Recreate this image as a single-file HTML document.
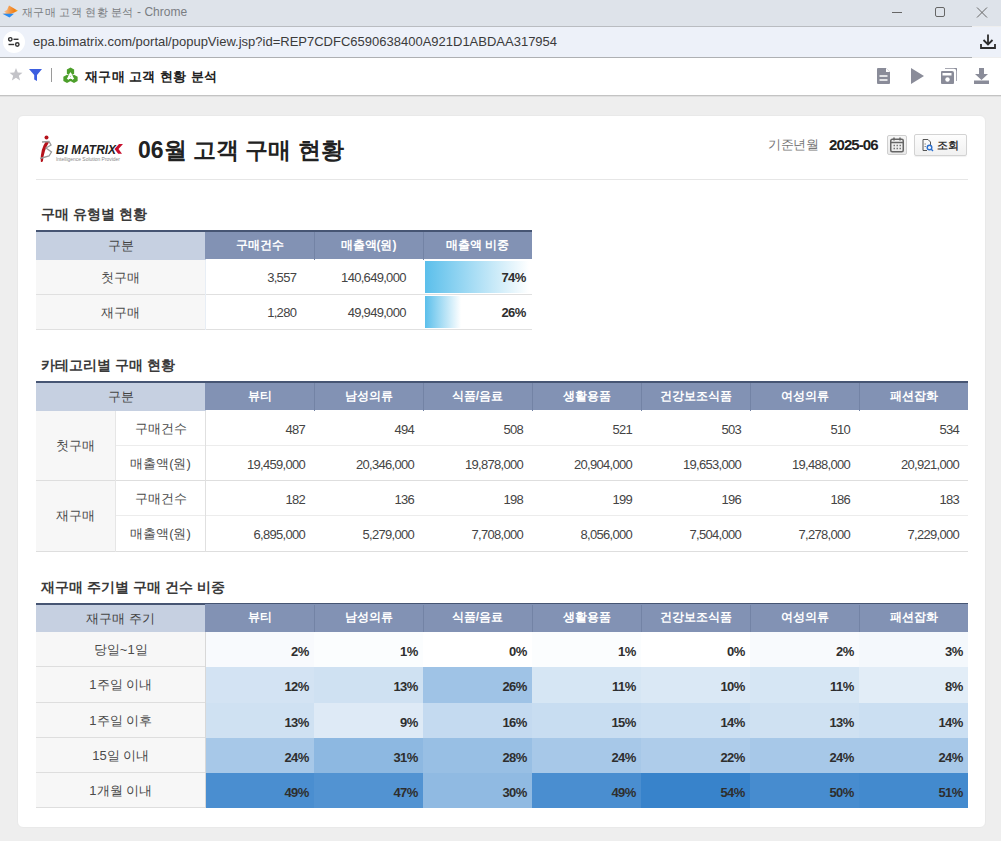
<!DOCTYPE html>
<html><head><meta charset="utf-8"><title>재구매 고객 현황 분석</title>
<style>
*{box-sizing:border-box;margin:0;padding:0}
html,body{width:1001px;height:841px;overflow:hidden}
body{position:relative;background:#eeeeee;font-family:"Liberation Sans", sans-serif;color:#333}
.a{position:absolute}
.t{white-space:nowrap}
.hd1{background:#c6d0e1;color:#444;text-align:center}
.hd2{background:#8292b4;color:#fff;text-align:center;font-weight:bold}
.num{text-align:right}
</style></head><body>

<div class="a" style="left:0;top:0;width:1001px;height:26px;background:#dee3ea"></div>
<div class="a" style="left:0;top:26px;width:972px;height:1px;background:#b9bcc1"></div>
<svg class="a" style="left:1px;top:4px" width="18" height="14" viewBox="0 0 18 14">
<defs><linearGradient id="og" x1="0" y1="0" x2="1" y2="0"><stop offset="0" stop-color="#fad2b0"/><stop offset="0.45" stop-color="#f39a4a"/><stop offset="0.8" stop-color="#f07d12"/><stop offset="1" stop-color="#ffc21a"/></linearGradient></defs>
<path d="M8 1.5 L17 6.8 L10 10 L1.5 10 L5 8.5 L3 7.5 L6 6 Z" fill="url(#og)"/>
<path d="M1.5 9.8 L13 9.8 L8.5 13.5 Z" fill="#2b8cf0"/>
</svg>
<div class="a t" style="left:22px;top:5px;font-size:12px;line-height:14px;color:#7a7d82"><span style="font-size:11px;letter-spacing:0.3px">재구매 고객 현황 분석</span> - Chrome</div>
<div class="a" style="left:892px;top:12px;width:10px;height:1px;background:#666"></div>
<div class="a" style="left:935px;top:7px;width:10px;height:10px;border:1px solid #666;border-radius:2px"></div>
<svg class="a" style="left:976px;top:7px" width="12" height="11" viewBox="0 0 12 11"><path d="M1 0.5 L11 10.5 M11 0.5 L1 10.5" stroke="#666" stroke-width="1"/></svg>
<div class="a" style="left:0;top:27px;width:1001px;height:30px;background:#edf1f9"></div>
<div class="a" style="left:0;top:57px;width:972px;height:1px;background:#aeb0b3"></div>
<div class="a" style="left:3px;top:31px;width:22px;height:22px;border-radius:50%;background:#fff"></div>
<svg class="a" style="left:7px;top:36px" width="14" height="12" viewBox="0 0 14 12">
<circle cx="3.3" cy="3.3" r="1.7" fill="none" stroke="#333" stroke-width="1.4"/><path d="M6.5 3.3 H11.5" stroke="#333" stroke-width="1.4"/>
<circle cx="10.3" cy="8.5" r="1.7" fill="none" stroke="#333" stroke-width="1.4"/><path d="M1.5 8.5 H7.2" stroke="#333" stroke-width="1.4"/>
</svg>
<div class="a t" style="left:33px;top:34px;font-size:13px;line-height:16px;color:#3b3b3b">epa.bimatrix.com/portal/popupView.jsp?id=REP7CDFC6590638400A921D1ABDAA317954</div>
<svg class="a" style="left:980px;top:34px" width="16" height="16" viewBox="0 0 16 16">
<path d="M8 0.5 V10 M3.5 6 L8 10.5 L12.5 6" fill="none" stroke="#2d2d2d" stroke-width="1.8"/>
<path d="M1 10 V14 H15 V10" fill="none" stroke="#2d2d2d" stroke-width="1.8"/>
</svg>
<div class="a" style="left:0;top:58px;width:1001px;height:37px;background:#fff"></div>
<div class="a" style="left:0;top:95px;width:1001px;height:1px;background:#c3c3c3"></div>
<div class="a" style="left:0;top:96px;width:1001px;height:1px;background:#e0e0e0"></div>
<svg class="a" style="left:9px;top:68px" width="14" height="13" viewBox="0 0 24 23"><path d="M12 0 L15.1 8 L23.5 8.3 L17 13.7 L19.3 22 L12 17.3 L4.7 22 L7 13.7 L0.5 8.3 L8.9 8 Z" fill="#c3c3c8"/></svg>
<svg class="a" style="left:29px;top:69px" width="13" height="12" viewBox="0 0 13 12"><path d="M0 0 H13 L8 6 V12 L5.2 10.5 V6 Z" fill="#3d5fe0"/></svg>
<div class="a" style="left:51px;top:68px;width:1px;height:14px;background:#9a9a9a"></div>
<svg class="a" style="left:63px;top:67px" width="16" height="17" viewBox="0 0 16 17"><path d="M7.50 8.80 L3.86 6.70 L3.86 2.50 L7.50 0.40 L11.14 2.50 L11.14 6.70 Z M4.00 16.10 L0.36 14.00 L0.36 9.80 L4.00 7.70 L7.64 9.80 L7.64 14.00 Z M11.00 16.10 L7.36 14.00 L7.36 9.80 L11.00 7.70 L14.64 9.80 L14.64 14.00 Z M7.5 5 L3.8 12 L11.2 12 Z" fill="#4d9f2b"/><path d="M7.5 6.2 L5.2 12.6 M7.5 6.2 L9.8 12.6 M6.1 10.3 H8.9" stroke="#fff" stroke-width="1.2" fill="none"/></svg>
<div class="a t" style="left:85px;top:69px;font-size:13.3px;letter-spacing:0.35px;line-height:16px;font-weight:bold;color:#222">재구매 고객 현황 분석</div>
<svg class="a" style="left:877px;top:68px" width="13" height="16" viewBox="0 0 13 16">
<path d="M1 0 H9 L13 4 V15 Q13 16 12 16 H1 Q0 16 0 15 V1 Q0 0 1 0 Z" fill="#8a8c99"/>
<path d="M9 0 V4 H13" fill="#fff"/><path d="M2.5 8 H10.5 M2.5 12 H10.5" stroke="#fff" stroke-width="1.6"/></svg>
<svg class="a" style="left:911px;top:68px" width="13" height="16" viewBox="0 0 13 16"><path d="M0 0 L13 8 L0 16 Z" fill="#8a8c99"/></svg>
<svg class="a" style="left:941px;top:68px" width="16" height="16" viewBox="0 0 16 16">
<path d="M4 0 H13 Q16 0 16 3 V13" fill="none" stroke="#8a8c99" stroke-width="1.5"/>
<path d="M1 3 H11 Q13 3 13 5 V15 Q13 16 12 16 H1 Q0 16 0 15 V4 Q0 3 1 3 Z" fill="#8a8c99"/>
<rect x="1.5" y="5" width="9" height="2.5" fill="#fff"/><circle cx="6.5" cy="11.5" r="2.2" fill="#fff"/></svg>
<svg class="a" style="left:974px;top:68px" width="15" height="16" viewBox="0 0 15 16">
<path d="M5 0 H10 V6 H14 L7.5 12 L1 6 H5 Z" fill="#8a8c99"/><rect x="0" y="12.5" width="15" height="3.5" fill="#8a8c99"/></svg>
<div class="a" style="left:17px;top:115px;width:969px;height:713px;background:#fff;border-radius:6px;border:1px solid #e9e9e9"></div>
<svg class="a" style="left:38px;top:134px" width="88" height="30" viewBox="0 0 88 30">
<circle cx="8.5" cy="3.5" r="2" fill="#b5121b"/>
<path d="M8 7.3 Q2.2 15 2.8 27.5 Q3.6 28.8 4.9 27.3 Q5.8 16.5 11 8.2 Z" fill="#b5121b"/>
<path d="M4 8 L11 7.5 L13 11 L8 14 L13.5 18 L11 22 L2 24.5" stroke="#9a9a9a" stroke-width="1.3" fill="none"/>
<text x="18" y="19.5" font-family="Liberation Sans" font-weight="bold" font-style="italic" font-size="12.5" fill="#222" textLength="60" lengthAdjust="spacingAndGlyphs">BI MATRIX</text>
<path d="M85 10 L80.5 15 L84 19.8 L80.2 19.8 L76.5 15 L81 10 Z" fill="#c8102e"/>
<text x="18" y="27" font-family="Liberation Sans" font-size="5" fill="#888" textLength="64" lengthAdjust="spacingAndGlyphs">Intelligence Solution Provider</text>
</svg>
<div class="a t" style="left:138px;top:136px;font-size:23px;line-height:28px;font-weight:bold;color:#222">06월 고객 구매 현황</div>
<div class="a t" style="left:768px;top:137px;font-size:12.5px;letter-spacing:-0.5px;line-height:16px;color:#777">기준년월</div>
<div class="a t" style="left:829px;top:137px;font-size:15px;letter-spacing:-0.9px;line-height:16px;font-weight:bold;color:#222">2025-06</div>
<div class="a" style="left:887px;top:135px;width:20px;height:20px;border:1px solid #cfcfcf;border-radius:2px;background:linear-gradient(#f6f6f6,#e9e9e9)"></div>
<svg class="a" style="left:890px;top:137px" width="14" height="16" viewBox="0 0 14 16">
<rect x="0.75" y="2.25" width="12.5" height="12.5" rx="1.5" fill="none" stroke="#666" stroke-width="1.5"/>
<path d="M1 5.5 H13" stroke="#666" stroke-width="1.5"/><path d="M4 0.5 V3.5 M10 0.5 V3.5" stroke="#666" stroke-width="1.5"/>
<path d="M3.5 8.5 H5 M6.5 8.5 H8 M9.5 8.5 H11 M3.5 11.5 H5 M6.5 11.5 H8 M9.5 11.5 H11" stroke="#777" stroke-width="1.3"/>
</svg>
<div class="a" style="left:914px;top:134px;width:53px;height:22px;border:1px solid #d3d3d3;border-radius:2px;background:linear-gradient(#fdfdfd,#f1f1f1);box-shadow:0 1px 1px rgba(0,0,0,0.06)"></div>
<svg class="a" style="left:922px;top:139px" width="12" height="13" viewBox="0 0 12 13">
<path d="M1 0.5 H6 L8.5 3 V6 M1 0.5 V11.5 H5" fill="none" stroke="#555" stroke-width="1"/>
<path d="M2.5 5 H4 M2.5 7.5 H4" stroke="#777" stroke-width="0.8"/>
<circle cx="7.5" cy="8.5" r="2.3" fill="none" stroke="#2b6fce" stroke-width="1.4"/><path d="M9 10 L11 12" stroke="#2b6fce" stroke-width="1.5"/>
</svg>
<div class="a t" style="left:937px;top:138px;font-size:11px;line-height:15px;font-weight:bold;color:#333">조회</div>
<div class="a" style="left:36px;top:179px;width:932px;height:1px;background:#e6e6e6"></div>
<div class="a t" style="left:41px;top:206px;font-size:14px;line-height:16px;font-weight:bold;color:#3a3a3a">구매 유형별 현황</div>
<div class="a" style="left:36px;top:230px;width:496px;height:2px;background:#465573"></div>
<div class="a t hd1" style="left:36px;top:232px;width:169.5px;height:27.600000000000023px;line-height:27.600000000000023px;font-size:13px;font-weight:normal;text-align:center;">구분</div>
<div class="a t hd2" style="left:205px;top:231.5px;width:109px;height:27.600000000000023px;line-height:27.600000000000023px;font-size:12px;font-weight:bold;text-align:center;">구매건수</div>
<div class="a t hd2" style="left:314px;top:231.5px;width:109px;height:27.600000000000023px;line-height:27.600000000000023px;font-size:12px;font-weight:bold;text-align:center;">매출액(원)</div>
<div class="a t hd2" style="left:423px;top:231.5px;width:109px;height:27.600000000000023px;line-height:27.600000000000023px;font-size:12px;font-weight:bold;text-align:center;">매출액 비중</div>
<div class="a" style="left:314px;top:232px;width:1px;height:27.600000000000023px;background:#7383a5"></div>
<div class="a" style="left:423px;top:232px;width:1px;height:27.600000000000023px;background:#7383a5"></div>
<div class="a" style="left:36px;top:259.6px;width:169.5px;height:35.25px;background:#f7f7f7"></div>
<div class="a t " style="left:36px;top:259.6px;width:169.5px;height:35.25px;line-height:35.25px;font-size:13px;font-weight:normal;text-align:center;color:#4a4a4a;">첫구매</div>
<div class="a t " style="left:205.5px;top:260.20000000000005px;width:109.0px;height:35.25px;line-height:35.25px;font-size:13px;font-weight:normal;text-align:right;letter-spacing:-0.7px;padding-right:18.3px;color:#444;">3,557</div>
<div class="a t " style="left:314.5px;top:260.20000000000005px;width:109.0px;height:35.25px;line-height:35.25px;font-size:13px;font-weight:normal;text-align:right;letter-spacing:-0.7px;padding-right:17.8px;color:#444;">140,649,000</div>
<div class="a" style="left:425px;top:261.1px;width:104px;height:31.75px;background:linear-gradient(90deg,#5bbfeb,#ffffff)"></div>
<div class="a t " style="left:423.5px;top:260.20000000000005px;width:108.5px;height:35.25px;line-height:35.25px;font-size:13px;font-weight:bold;text-align:right;letter-spacing:-0.6px;padding-right:6.4px;color:#2e2e2e;">74%</div>
<div class="a" style="left:36px;top:293.85px;width:496px;height:1px;background:#e0e0e0"></div>
<div class="a" style="left:36px;top:294.85px;width:169.5px;height:35.25px;background:#f7f7f7"></div>
<div class="a t " style="left:36px;top:294.85px;width:169.5px;height:35.25px;line-height:35.25px;font-size:13px;font-weight:normal;text-align:center;color:#4a4a4a;">재구매</div>
<div class="a t " style="left:205.5px;top:295.45000000000005px;width:109.0px;height:35.25px;line-height:35.25px;font-size:13px;font-weight:normal;text-align:right;letter-spacing:-0.7px;padding-right:18.3px;color:#444;">1,280</div>
<div class="a t " style="left:314.5px;top:295.45000000000005px;width:109.0px;height:35.25px;line-height:35.25px;font-size:13px;font-weight:normal;text-align:right;letter-spacing:-0.7px;padding-right:17.8px;color:#444;">49,949,000</div>
<div class="a" style="left:425px;top:296.35px;width:36px;height:31.75px;background:linear-gradient(90deg,#5bbfeb,#ffffff)"></div>
<div class="a t " style="left:423.5px;top:295.45000000000005px;width:108.5px;height:35.25px;line-height:35.25px;font-size:13px;font-weight:bold;text-align:right;letter-spacing:-0.6px;padding-right:6.4px;color:#2e2e2e;">26%</div>
<div class="a" style="left:36px;top:329.1px;width:496px;height:1px;background:#e0e0e0"></div>
<div class="a" style="left:205px;top:259.6px;width:1px;height:70.5px;background:#e8eef5"></div>
<div class="a t" style="left:41px;top:357px;font-size:14px;line-height:16px;font-weight:bold;color:#3a3a3a">카테고리별 구매 현황</div>
<div class="a" style="left:36px;top:381px;width:932px;height:2px;background:#465573"></div>
<div class="a t hd1" style="left:36px;top:383px;width:169.5px;height:27.5px;line-height:27.5px;font-size:13px;font-weight:normal;text-align:center;">구분</div>
<div class="a t hd2" style="left:205px;top:382.5px;width:109px;height:27.5px;line-height:27.5px;font-size:12px;font-weight:bold;text-align:center;">뷰티</div>
<div class="a t hd2" style="left:314px;top:382.5px;width:109px;height:27.5px;line-height:27.5px;font-size:12px;font-weight:bold;text-align:center;">남성의류</div>
<div class="a t hd2" style="left:423px;top:382.5px;width:109px;height:27.5px;line-height:27.5px;font-size:12px;font-weight:bold;text-align:center;">식품/음료</div>
<div class="a t hd2" style="left:532px;top:382.5px;width:109px;height:27.5px;line-height:27.5px;font-size:12px;font-weight:bold;text-align:center;">생활용품</div>
<div class="a t hd2" style="left:641px;top:382.5px;width:109px;height:27.5px;line-height:27.5px;font-size:12px;font-weight:bold;text-align:center;">건강보조식품</div>
<div class="a t hd2" style="left:750px;top:382.5px;width:109px;height:27.5px;line-height:27.5px;font-size:12px;font-weight:bold;text-align:center;">여성의류</div>
<div class="a t hd2" style="left:859px;top:382.5px;width:109px;height:27.5px;line-height:27.5px;font-size:12px;font-weight:bold;text-align:center;">패션잡화</div>
<div class="a" style="left:314px;top:383px;width:1px;height:27.5px;background:#7383a5"></div>
<div class="a" style="left:423px;top:383px;width:1px;height:27.5px;background:#7383a5"></div>
<div class="a" style="left:532px;top:383px;width:1px;height:27.5px;background:#7383a5"></div>
<div class="a" style="left:641px;top:383px;width:1px;height:27.5px;background:#7383a5"></div>
<div class="a" style="left:750px;top:383px;width:1px;height:27.5px;background:#7383a5"></div>
<div class="a" style="left:859px;top:383px;width:1px;height:27.5px;background:#7383a5"></div>
<div class="a" style="left:36px;top:410.5px;width:79.5px;height:70.5px;background:#f7f7f7"></div>
<div class="a t " style="left:36px;top:410.5px;width:79.5px;height:70.5px;line-height:70.5px;font-size:13px;font-weight:normal;text-align:center;color:#4a4a4a;">첫구매</div>
<div class="a t " style="left:115.5px;top:410.5px;width:90.0px;height:35.25px;line-height:35.25px;font-size:13px;font-weight:normal;text-align:center;color:#4a4a4a;">구매건수</div>
<div class="a t " style="left:205px;top:411.7px;width:109px;height:35.25px;line-height:35.25px;font-size:13px;font-weight:normal;text-align:right;letter-spacing:-0.7px;padding-right:9.0px;color:#444;">487</div>
<div class="a t " style="left:314px;top:411.7px;width:109px;height:35.25px;line-height:35.25px;font-size:13px;font-weight:normal;text-align:right;letter-spacing:-0.7px;padding-right:9.0px;color:#444;">494</div>
<div class="a t " style="left:423px;top:411.7px;width:109px;height:35.25px;line-height:35.25px;font-size:13px;font-weight:normal;text-align:right;letter-spacing:-0.7px;padding-right:9.0px;color:#444;">508</div>
<div class="a t " style="left:532px;top:411.7px;width:109px;height:35.25px;line-height:35.25px;font-size:13px;font-weight:normal;text-align:right;letter-spacing:-0.7px;padding-right:9.0px;color:#444;">521</div>
<div class="a t " style="left:641px;top:411.7px;width:109px;height:35.25px;line-height:35.25px;font-size:13px;font-weight:normal;text-align:right;letter-spacing:-0.7px;padding-right:9.0px;color:#444;">503</div>
<div class="a t " style="left:750px;top:411.7px;width:109px;height:35.25px;line-height:35.25px;font-size:13px;font-weight:normal;text-align:right;letter-spacing:-0.7px;padding-right:9.0px;color:#444;">510</div>
<div class="a t " style="left:859px;top:411.7px;width:109px;height:35.25px;line-height:35.25px;font-size:13px;font-weight:normal;text-align:right;letter-spacing:-0.7px;padding-right:9.0px;color:#444;">534</div>
<div class="a" style="left:115.5px;top:444.75px;width:852.5px;height:1px;background:#ececec"></div>
<div class="a t " style="left:115.5px;top:445.75px;width:90.0px;height:35.25px;line-height:35.25px;font-size:13px;font-weight:normal;text-align:center;color:#4a4a4a;">매출액(원)</div>
<div class="a t " style="left:205px;top:446.95px;width:109px;height:35.25px;line-height:35.25px;font-size:13px;font-weight:normal;text-align:right;letter-spacing:-0.7px;padding-right:9.0px;color:#444;">19,459,000</div>
<div class="a t " style="left:314px;top:446.95px;width:109px;height:35.25px;line-height:35.25px;font-size:13px;font-weight:normal;text-align:right;letter-spacing:-0.7px;padding-right:9.0px;color:#444;">20,346,000</div>
<div class="a t " style="left:423px;top:446.95px;width:109px;height:35.25px;line-height:35.25px;font-size:13px;font-weight:normal;text-align:right;letter-spacing:-0.7px;padding-right:9.0px;color:#444;">19,878,000</div>
<div class="a t " style="left:532px;top:446.95px;width:109px;height:35.25px;line-height:35.25px;font-size:13px;font-weight:normal;text-align:right;letter-spacing:-0.7px;padding-right:9.0px;color:#444;">20,904,000</div>
<div class="a t " style="left:641px;top:446.95px;width:109px;height:35.25px;line-height:35.25px;font-size:13px;font-weight:normal;text-align:right;letter-spacing:-0.7px;padding-right:9.0px;color:#444;">19,653,000</div>
<div class="a t " style="left:750px;top:446.95px;width:109px;height:35.25px;line-height:35.25px;font-size:13px;font-weight:normal;text-align:right;letter-spacing:-0.7px;padding-right:9.0px;color:#444;">19,488,000</div>
<div class="a t " style="left:859px;top:446.95px;width:109px;height:35.25px;line-height:35.25px;font-size:13px;font-weight:normal;text-align:right;letter-spacing:-0.7px;padding-right:9.0px;color:#444;">20,921,000</div>
<div class="a" style="left:36px;top:480.0px;width:932px;height:1px;background:#dedede"></div>
<div class="a" style="left:36px;top:481.0px;width:79.5px;height:70.5px;background:#f7f7f7"></div>
<div class="a t " style="left:36px;top:481.0px;width:79.5px;height:70.5px;line-height:70.5px;font-size:13px;font-weight:normal;text-align:center;color:#4a4a4a;">재구매</div>
<div class="a t " style="left:115.5px;top:481.0px;width:90.0px;height:35.25px;line-height:35.25px;font-size:13px;font-weight:normal;text-align:center;color:#4a4a4a;">구매건수</div>
<div class="a t " style="left:205px;top:482.2px;width:109px;height:35.25px;line-height:35.25px;font-size:13px;font-weight:normal;text-align:right;letter-spacing:-0.7px;padding-right:9.0px;color:#444;">182</div>
<div class="a t " style="left:314px;top:482.2px;width:109px;height:35.25px;line-height:35.25px;font-size:13px;font-weight:normal;text-align:right;letter-spacing:-0.7px;padding-right:9.0px;color:#444;">136</div>
<div class="a t " style="left:423px;top:482.2px;width:109px;height:35.25px;line-height:35.25px;font-size:13px;font-weight:normal;text-align:right;letter-spacing:-0.7px;padding-right:9.0px;color:#444;">198</div>
<div class="a t " style="left:532px;top:482.2px;width:109px;height:35.25px;line-height:35.25px;font-size:13px;font-weight:normal;text-align:right;letter-spacing:-0.7px;padding-right:9.0px;color:#444;">199</div>
<div class="a t " style="left:641px;top:482.2px;width:109px;height:35.25px;line-height:35.25px;font-size:13px;font-weight:normal;text-align:right;letter-spacing:-0.7px;padding-right:9.0px;color:#444;">196</div>
<div class="a t " style="left:750px;top:482.2px;width:109px;height:35.25px;line-height:35.25px;font-size:13px;font-weight:normal;text-align:right;letter-spacing:-0.7px;padding-right:9.0px;color:#444;">186</div>
<div class="a t " style="left:859px;top:482.2px;width:109px;height:35.25px;line-height:35.25px;font-size:13px;font-weight:normal;text-align:right;letter-spacing:-0.7px;padding-right:9.0px;color:#444;">183</div>
<div class="a" style="left:115.5px;top:515.25px;width:852.5px;height:1px;background:#ececec"></div>
<div class="a t " style="left:115.5px;top:516.25px;width:90.0px;height:35.25px;line-height:35.25px;font-size:13px;font-weight:normal;text-align:center;color:#4a4a4a;">매출액(원)</div>
<div class="a t " style="left:205px;top:517.45px;width:109px;height:35.25px;line-height:35.25px;font-size:13px;font-weight:normal;text-align:right;letter-spacing:-0.7px;padding-right:9.0px;color:#444;">6,895,000</div>
<div class="a t " style="left:314px;top:517.45px;width:109px;height:35.25px;line-height:35.25px;font-size:13px;font-weight:normal;text-align:right;letter-spacing:-0.7px;padding-right:9.0px;color:#444;">5,279,000</div>
<div class="a t " style="left:423px;top:517.45px;width:109px;height:35.25px;line-height:35.25px;font-size:13px;font-weight:normal;text-align:right;letter-spacing:-0.7px;padding-right:9.0px;color:#444;">7,708,000</div>
<div class="a t " style="left:532px;top:517.45px;width:109px;height:35.25px;line-height:35.25px;font-size:13px;font-weight:normal;text-align:right;letter-spacing:-0.7px;padding-right:9.0px;color:#444;">8,056,000</div>
<div class="a t " style="left:641px;top:517.45px;width:109px;height:35.25px;line-height:35.25px;font-size:13px;font-weight:normal;text-align:right;letter-spacing:-0.7px;padding-right:9.0px;color:#444;">7,504,000</div>
<div class="a t " style="left:750px;top:517.45px;width:109px;height:35.25px;line-height:35.25px;font-size:13px;font-weight:normal;text-align:right;letter-spacing:-0.7px;padding-right:9.0px;color:#444;">7,278,000</div>
<div class="a t " style="left:859px;top:517.45px;width:109px;height:35.25px;line-height:35.25px;font-size:13px;font-weight:normal;text-align:right;letter-spacing:-0.7px;padding-right:9.0px;color:#444;">7,229,000</div>
<div class="a" style="left:36px;top:550.5px;width:932px;height:1px;background:#dedede"></div>
<div class="a" style="left:115px;top:410.5px;width:1px;height:141.0px;background:#e6e6e6"></div>
<div class="a" style="left:205px;top:410.5px;width:1px;height:141.0px;background:#e0e0e0"></div>
<div class="a t" style="left:41px;top:579px;font-size:14px;line-height:16px;font-weight:bold;color:#3a3a3a">재구매 주기별 구매 건수 비중</div>
<div class="a" style="left:36px;top:603px;width:932px;height:2px;background:#465573"></div>
<div class="a t hd1" style="left:36px;top:604.5px;width:169.5px;height:27.5px;line-height:27.5px;font-size:13px;font-weight:normal;text-align:center;">재구매 주기</div>
<div class="a t hd2" style="left:205px;top:604.0px;width:109px;height:27.5px;line-height:27.5px;font-size:12px;font-weight:bold;text-align:center;">뷰티</div>
<div class="a t hd2" style="left:314px;top:604.0px;width:109px;height:27.5px;line-height:27.5px;font-size:12px;font-weight:bold;text-align:center;">남성의류</div>
<div class="a t hd2" style="left:423px;top:604.0px;width:109px;height:27.5px;line-height:27.5px;font-size:12px;font-weight:bold;text-align:center;">식품/음료</div>
<div class="a t hd2" style="left:532px;top:604.0px;width:109px;height:27.5px;line-height:27.5px;font-size:12px;font-weight:bold;text-align:center;">생활용품</div>
<div class="a t hd2" style="left:641px;top:604.0px;width:109px;height:27.5px;line-height:27.5px;font-size:12px;font-weight:bold;text-align:center;">건강보조식품</div>
<div class="a t hd2" style="left:750px;top:604.0px;width:109px;height:27.5px;line-height:27.5px;font-size:12px;font-weight:bold;text-align:center;">여성의류</div>
<div class="a t hd2" style="left:859px;top:604.0px;width:109px;height:27.5px;line-height:27.5px;font-size:12px;font-weight:bold;text-align:center;">패션잡화</div>
<div class="a" style="left:314px;top:604.5px;width:1px;height:27.5px;background:#7383a5"></div>
<div class="a" style="left:423px;top:604.5px;width:1px;height:27.5px;background:#7383a5"></div>
<div class="a" style="left:532px;top:604.5px;width:1px;height:27.5px;background:#7383a5"></div>
<div class="a" style="left:641px;top:604.5px;width:1px;height:27.5px;background:#7383a5"></div>
<div class="a" style="left:750px;top:604.5px;width:1px;height:27.5px;background:#7383a5"></div>
<div class="a" style="left:859px;top:604.5px;width:1px;height:27.5px;background:#7383a5"></div>
<div class="a" style="left:36px;top:632.0px;width:169.5px;height:35.25px;background:#f7f7f7"></div>
<div class="a t " style="left:36px;top:632.0px;width:169.5px;height:35.25px;line-height:35.25px;font-size:13px;font-weight:normal;text-align:center;color:#4a4a4a;">당일~1일</div>
<div class="a" style="left:36px;top:666.25px;width:169px;height:1px;background:#dedede"></div>
<div class="a" style="left:205px;top:632.0px;width:109px;height:35.25px;background:#f8fafd"></div>
<div class="a t " style="left:205px;top:634.0px;width:109px;height:35.25px;line-height:35.25px;font-size:13px;font-weight:bold;text-align:right;letter-spacing:-0.6px;padding-right:5.4px;color:#2e2e2e;">2%</div>
<div class="a" style="left:314px;top:632.0px;width:109px;height:35.25px;background:#fbfdfe"></div>
<div class="a t " style="left:314px;top:634.0px;width:109px;height:35.25px;line-height:35.25px;font-size:13px;font-weight:bold;text-align:right;letter-spacing:-0.6px;padding-right:5.4px;color:#2e2e2e;">1%</div>
<div class="a" style="left:423px;top:632.0px;width:109px;height:35.25px;background:#ffffff"></div>
<div class="a t " style="left:423px;top:634.0px;width:109px;height:35.25px;line-height:35.25px;font-size:13px;font-weight:bold;text-align:right;letter-spacing:-0.6px;padding-right:5.4px;color:#2e2e2e;">0%</div>
<div class="a" style="left:532px;top:632.0px;width:109px;height:35.25px;background:#fbfdfe"></div>
<div class="a t " style="left:532px;top:634.0px;width:109px;height:35.25px;line-height:35.25px;font-size:13px;font-weight:bold;text-align:right;letter-spacing:-0.6px;padding-right:5.4px;color:#2e2e2e;">1%</div>
<div class="a" style="left:641px;top:632.0px;width:109px;height:35.25px;background:#ffffff"></div>
<div class="a t " style="left:641px;top:634.0px;width:109px;height:35.25px;line-height:35.25px;font-size:13px;font-weight:bold;text-align:right;letter-spacing:-0.6px;padding-right:5.4px;color:#2e2e2e;">0%</div>
<div class="a" style="left:750px;top:632.0px;width:109px;height:35.25px;background:#f8fafd"></div>
<div class="a t " style="left:750px;top:634.0px;width:109px;height:35.25px;line-height:35.25px;font-size:13px;font-weight:bold;text-align:right;letter-spacing:-0.6px;padding-right:5.4px;color:#2e2e2e;">2%</div>
<div class="a" style="left:859px;top:632.0px;width:109px;height:35.25px;background:#f4f8fc"></div>
<div class="a t " style="left:859px;top:634.0px;width:109px;height:35.25px;line-height:35.25px;font-size:13px;font-weight:bold;text-align:right;letter-spacing:-0.6px;padding-right:5.4px;color:#2e2e2e;">3%</div>
<div class="a" style="left:36px;top:667.25px;width:169.5px;height:35.25px;background:#f7f7f7"></div>
<div class="a t " style="left:36px;top:667.25px;width:169.5px;height:35.25px;line-height:35.25px;font-size:13px;font-weight:normal;text-align:center;color:#4a4a4a;">1주일 이내</div>
<div class="a" style="left:36px;top:701.5px;width:169px;height:1px;background:#dedede"></div>
<div class="a" style="left:205px;top:667.25px;width:109px;height:35.25px;background:#d3e3f3"></div>
<div class="a t " style="left:205px;top:669.25px;width:109px;height:35.25px;line-height:35.25px;font-size:13px;font-weight:bold;text-align:right;letter-spacing:-0.6px;padding-right:5.4px;color:#2e2e2e;">12%</div>
<div class="a" style="left:314px;top:667.25px;width:109px;height:35.25px;background:#cfe1f2"></div>
<div class="a t " style="left:314px;top:669.25px;width:109px;height:35.25px;line-height:35.25px;font-size:13px;font-weight:bold;text-align:right;letter-spacing:-0.6px;padding-right:5.4px;color:#2e2e2e;">13%</div>
<div class="a" style="left:423px;top:667.25px;width:109px;height:35.25px;background:#9fc3e6"></div>
<div class="a t " style="left:423px;top:669.25px;width:109px;height:35.25px;line-height:35.25px;font-size:13px;font-weight:bold;text-align:right;letter-spacing:-0.6px;padding-right:5.4px;color:#2e2e2e;">26%</div>
<div class="a" style="left:532px;top:667.25px;width:109px;height:35.25px;background:#d6e6f4"></div>
<div class="a t " style="left:532px;top:669.25px;width:109px;height:35.25px;line-height:35.25px;font-size:13px;font-weight:bold;text-align:right;letter-spacing:-0.6px;padding-right:5.4px;color:#2e2e2e;">11%</div>
<div class="a" style="left:641px;top:667.25px;width:109px;height:35.25px;background:#dae8f5"></div>
<div class="a t " style="left:641px;top:669.25px;width:109px;height:35.25px;line-height:35.25px;font-size:13px;font-weight:bold;text-align:right;letter-spacing:-0.6px;padding-right:5.4px;color:#2e2e2e;">10%</div>
<div class="a" style="left:750px;top:667.25px;width:109px;height:35.25px;background:#d6e6f4"></div>
<div class="a t " style="left:750px;top:669.25px;width:109px;height:35.25px;line-height:35.25px;font-size:13px;font-weight:bold;text-align:right;letter-spacing:-0.6px;padding-right:5.4px;color:#2e2e2e;">11%</div>
<div class="a" style="left:859px;top:667.25px;width:109px;height:35.25px;background:#e2edf7"></div>
<div class="a t " style="left:859px;top:669.25px;width:109px;height:35.25px;line-height:35.25px;font-size:13px;font-weight:bold;text-align:right;letter-spacing:-0.6px;padding-right:5.4px;color:#2e2e2e;">8%</div>
<div class="a" style="left:36px;top:702.5px;width:169.5px;height:35.25px;background:#f7f7f7"></div>
<div class="a t " style="left:36px;top:702.5px;width:169.5px;height:35.25px;line-height:35.25px;font-size:13px;font-weight:normal;text-align:center;color:#4a4a4a;">1주일 이후</div>
<div class="a" style="left:36px;top:736.75px;width:169px;height:1px;background:#dedede"></div>
<div class="a" style="left:205px;top:702.5px;width:109px;height:35.25px;background:#cfe1f2"></div>
<div class="a t " style="left:205px;top:704.5px;width:109px;height:35.25px;line-height:35.25px;font-size:13px;font-weight:bold;text-align:right;letter-spacing:-0.6px;padding-right:5.4px;color:#2e2e2e;">13%</div>
<div class="a" style="left:314px;top:702.5px;width:109px;height:35.25px;background:#deeaf6"></div>
<div class="a t " style="left:314px;top:704.5px;width:109px;height:35.25px;line-height:35.25px;font-size:13px;font-weight:bold;text-align:right;letter-spacing:-0.6px;padding-right:5.4px;color:#2e2e2e;">9%</div>
<div class="a" style="left:423px;top:702.5px;width:109px;height:35.25px;background:#c4daf0"></div>
<div class="a t " style="left:423px;top:704.5px;width:109px;height:35.25px;line-height:35.25px;font-size:13px;font-weight:bold;text-align:right;letter-spacing:-0.6px;padding-right:5.4px;color:#2e2e2e;">16%</div>
<div class="a" style="left:532px;top:702.5px;width:109px;height:35.25px;background:#c8ddf1"></div>
<div class="a t " style="left:532px;top:704.5px;width:109px;height:35.25px;line-height:35.25px;font-size:13px;font-weight:bold;text-align:right;letter-spacing:-0.6px;padding-right:5.4px;color:#2e2e2e;">15%</div>
<div class="a" style="left:641px;top:702.5px;width:109px;height:35.25px;background:#cbdff2"></div>
<div class="a t " style="left:641px;top:704.5px;width:109px;height:35.25px;line-height:35.25px;font-size:13px;font-weight:bold;text-align:right;letter-spacing:-0.6px;padding-right:5.4px;color:#2e2e2e;">14%</div>
<div class="a" style="left:750px;top:702.5px;width:109px;height:35.25px;background:#cfe1f2"></div>
<div class="a t " style="left:750px;top:704.5px;width:109px;height:35.25px;line-height:35.25px;font-size:13px;font-weight:bold;text-align:right;letter-spacing:-0.6px;padding-right:5.4px;color:#2e2e2e;">13%</div>
<div class="a" style="left:859px;top:702.5px;width:109px;height:35.25px;background:#cbdff2"></div>
<div class="a t " style="left:859px;top:704.5px;width:109px;height:35.25px;line-height:35.25px;font-size:13px;font-weight:bold;text-align:right;letter-spacing:-0.6px;padding-right:5.4px;color:#2e2e2e;">14%</div>
<div class="a" style="left:36px;top:737.75px;width:169.5px;height:35.25px;background:#f7f7f7"></div>
<div class="a t " style="left:36px;top:737.75px;width:169.5px;height:35.25px;line-height:35.25px;font-size:13px;font-weight:normal;text-align:center;color:#4a4a4a;">15일 이내</div>
<div class="a" style="left:36px;top:772.0px;width:169px;height:1px;background:#dedede"></div>
<div class="a" style="left:205px;top:737.75px;width:109px;height:35.25px;background:#a7c8e8"></div>
<div class="a t " style="left:205px;top:739.75px;width:109px;height:35.25px;line-height:35.25px;font-size:13px;font-weight:bold;text-align:right;letter-spacing:-0.6px;padding-right:5.4px;color:#2e2e2e;">24%</div>
<div class="a" style="left:314px;top:737.75px;width:109px;height:35.25px;background:#8db8e1"></div>
<div class="a t " style="left:314px;top:739.75px;width:109px;height:35.25px;line-height:35.25px;font-size:13px;font-weight:bold;text-align:right;letter-spacing:-0.6px;padding-right:5.4px;color:#2e2e2e;">31%</div>
<div class="a" style="left:423px;top:737.75px;width:109px;height:35.25px;background:#98bfe4"></div>
<div class="a t " style="left:423px;top:739.75px;width:109px;height:35.25px;line-height:35.25px;font-size:13px;font-weight:bold;text-align:right;letter-spacing:-0.6px;padding-right:5.4px;color:#2e2e2e;">28%</div>
<div class="a" style="left:532px;top:737.75px;width:109px;height:35.25px;background:#a7c8e8"></div>
<div class="a t " style="left:532px;top:739.75px;width:109px;height:35.25px;line-height:35.25px;font-size:13px;font-weight:bold;text-align:right;letter-spacing:-0.6px;padding-right:5.4px;color:#2e2e2e;">24%</div>
<div class="a" style="left:641px;top:737.75px;width:109px;height:35.25px;background:#aeccea"></div>
<div class="a t " style="left:641px;top:739.75px;width:109px;height:35.25px;line-height:35.25px;font-size:13px;font-weight:bold;text-align:right;letter-spacing:-0.6px;padding-right:5.4px;color:#2e2e2e;">22%</div>
<div class="a" style="left:750px;top:737.75px;width:109px;height:35.25px;background:#a7c8e8"></div>
<div class="a t " style="left:750px;top:739.75px;width:109px;height:35.25px;line-height:35.25px;font-size:13px;font-weight:bold;text-align:right;letter-spacing:-0.6px;padding-right:5.4px;color:#2e2e2e;">24%</div>
<div class="a" style="left:859px;top:737.75px;width:109px;height:35.25px;background:#a7c8e8"></div>
<div class="a t " style="left:859px;top:739.75px;width:109px;height:35.25px;line-height:35.25px;font-size:13px;font-weight:bold;text-align:right;letter-spacing:-0.6px;padding-right:5.4px;color:#2e2e2e;">24%</div>
<div class="a" style="left:36px;top:773.0px;width:169.5px;height:35.25px;background:#f7f7f7"></div>
<div class="a t " style="left:36px;top:773.0px;width:169.5px;height:35.25px;line-height:35.25px;font-size:13px;font-weight:normal;text-align:center;color:#4a4a4a;">1개월 이내</div>
<div class="a" style="left:36px;top:807.25px;width:169px;height:1px;background:#dedede"></div>
<div class="a" style="left:205px;top:773.0px;width:109px;height:35.25px;background:#4a8ed0"></div>
<div class="a t " style="left:205px;top:775.0px;width:109px;height:35.25px;line-height:35.25px;font-size:13px;font-weight:bold;text-align:right;letter-spacing:-0.6px;padding-right:5.4px;color:#2e2e2e;">49%</div>
<div class="a" style="left:314px;top:773.0px;width:109px;height:35.25px;background:#5293d2"></div>
<div class="a t " style="left:314px;top:775.0px;width:109px;height:35.25px;line-height:35.25px;font-size:13px;font-weight:bold;text-align:right;letter-spacing:-0.6px;padding-right:5.4px;color:#2e2e2e;">47%</div>
<div class="a" style="left:423px;top:773.0px;width:109px;height:35.25px;background:#90bae2"></div>
<div class="a t " style="left:423px;top:775.0px;width:109px;height:35.25px;line-height:35.25px;font-size:13px;font-weight:bold;text-align:right;letter-spacing:-0.6px;padding-right:5.4px;color:#2e2e2e;">30%</div>
<div class="a" style="left:532px;top:773.0px;width:109px;height:35.25px;background:#4a8ed0"></div>
<div class="a t " style="left:532px;top:775.0px;width:109px;height:35.25px;line-height:35.25px;font-size:13px;font-weight:bold;text-align:right;letter-spacing:-0.6px;padding-right:5.4px;color:#2e2e2e;">49%</div>
<div class="a" style="left:641px;top:773.0px;width:109px;height:35.25px;background:#3883cb"></div>
<div class="a t " style="left:641px;top:775.0px;width:109px;height:35.25px;line-height:35.25px;font-size:13px;font-weight:bold;text-align:right;letter-spacing:-0.6px;padding-right:5.4px;color:#2e2e2e;">54%</div>
<div class="a" style="left:750px;top:773.0px;width:109px;height:35.25px;background:#478ccf"></div>
<div class="a t " style="left:750px;top:775.0px;width:109px;height:35.25px;line-height:35.25px;font-size:13px;font-weight:bold;text-align:right;letter-spacing:-0.6px;padding-right:5.4px;color:#2e2e2e;">50%</div>
<div class="a" style="left:859px;top:773.0px;width:109px;height:35.25px;background:#438ace"></div>
<div class="a t " style="left:859px;top:775.0px;width:109px;height:35.25px;line-height:35.25px;font-size:13px;font-weight:bold;text-align:right;letter-spacing:-0.6px;padding-right:5.4px;color:#2e2e2e;">51%</div>
<div class="a" style="left:205px;top:632px;width:1px;height:176.25px;background:#d8d8d8"></div>
</body></html>
